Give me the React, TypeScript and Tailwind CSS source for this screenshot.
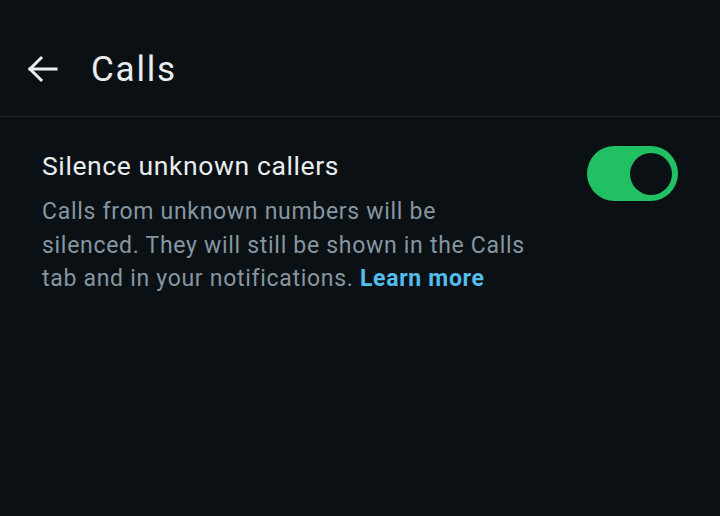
export default function App() {
  return (
    <div className="w-[720px] h-[516px] bg-[#0b1014] overflow-hidden" style={{ fontFamily: 'Roboto, "Noto Sans", sans-serif' }}>
      <div className="h-[117px] flex items-center pt-[22px] border-b border-[#1b2226]">
        <div className="pl-[27px] pr-[33px]">
          <svg width="31" height="28" viewBox="0 0 31 28" fill="none" stroke="#e9edef" strokeWidth="3" strokeLinecap="square">
            <path d="M3 14 H29" />
            <path d="M14 3 L3 14 L14 25" />
          </svg>
        </div>
        <h1 className="text-[35px] tracking-[1.8px] text-[#e9edef] leading-none">Calls</h1>
      </div>
      <div className="flex items-start pl-[42px] pr-[42px] pt-[32px]">
        <div className="flex-1">
          <div className="text-[26.5px] tracking-[0.6px] leading-[34px] text-[#e9edef]">Silence unknown callers</div>
          <p className="text-[23px] tracking-[0.7px] leading-[33.5px] text-[#8696a0] mt-[12px]">
            <span className="block whitespace-nowrap">Calls from unknown numbers will be</span>
            <span className="block whitespace-nowrap">silenced. They will still be shown in the Calls</span>
            <span className="block whitespace-nowrap">
              tab and in your notifications. <span className="text-[#53bdeb] font-bold">Learn more</span>
            </span>
          </p>
        </div>
        <div className="mt-[-3px] w-[91px] h-[55px] rounded-full bg-[#21c063] flex items-center justify-end pr-[6px]">
          <div className="w-[42px] h-[42px] rounded-full bg-[#0b1014]" />
        </div>
      </div>
    </div>
  );
}
